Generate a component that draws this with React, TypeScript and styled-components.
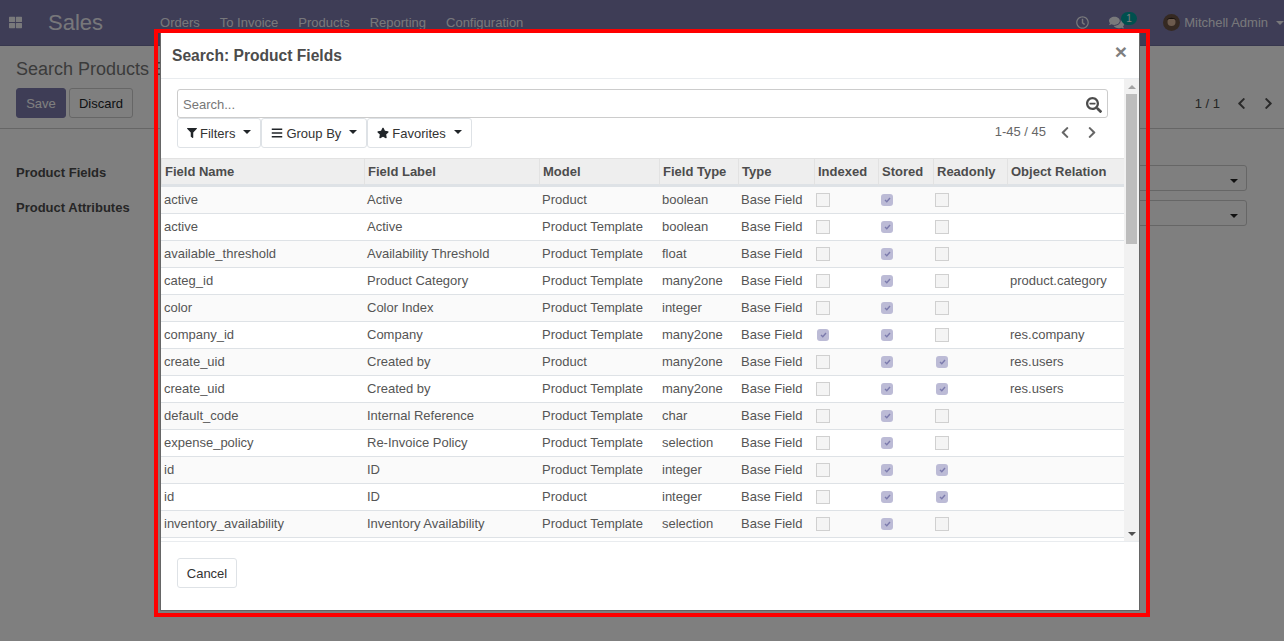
import { FC } from 'react'
import styled, { createGlobalStyle } from 'styled-components'
import {
  FaBars,
  FaChevronLeft,
  FaChevronRight,
  FaComments,
  FaFilter,
  FaRegClock,
  FaSearchMinus,
  FaStar,
  FaThLarge
} from 'react-icons/fa'

const GlobalStyle = createGlobalStyle`
  html, body {
    margin: 0;
    height: 100%;
    overflow: hidden;
    background: #fff;
    font-family: "Liberation Sans", Arial, sans-serif;
    font-size: 13px;
    color: #4c4c4c;
  }
  * { box-sizing: border-box; }
`

const Page = styled.div`
  height: 641px;
  display: flex;
  flex-direction: column;
`

const NavBar = styled.nav`
  height: 46px;
  background: #7c7bad;
  border-bottom: 1px solid #6f6e9c;
  display: flex;
  align-items: center;
  color: rgba(255, 255, 255, 0.9);
  padding-left: 9px;
`

const AppsIcon = styled(FaThLarge)`
  width: 13px;
  height: 13px;
  margin-right: 26px;
`

const Brand = styled.span`
  font-size: 22px;
  margin-right: 57px;
`

const NavItem = styled.span`
  margin-right: 20px;
`

const NavRight = styled.div`
  margin-left: auto;
  display: flex;
  align-items: center;
`

const Systray = styled.span<{ $gap: number }>`
  position: relative;
  display: flex;
  margin-right: ${({ $gap }) => $gap}px;
`

const Counter = styled.span`
  position: absolute;
  top: -3px;
  left: 12px;
  background: #00a09d;
  border-radius: 7px;
  font-size: 10px;
  line-height: 13px;
  padding: 0 5px;
  color: #fff;
`

const Avatar = styled.svg`
  width: 17px;
  height: 17px;
  margin-right: 4px;
`

const Caret = styled.span`
  display: inline-block;
  width: 0;
  height: 0;
  border-top: 4px solid currentColor;
  border-left: 4px solid transparent;
  border-right: 4px solid transparent;
`

const UserCaret = styled(Caret)`
  margin-left: 8px;
`

const ControlPanel = styled.div`
  height: 83px;
  background: #fff;
  border-bottom: 1px solid #ccc;
  padding: 12px 10px 0 16px;
`

const Breadcrumb = styled.div`
  font-size: 18px;
  line-height: 22px;
  color: #777;
  margin-bottom: 8px;
`

const ControlRow = styled.div`
  display: flex;
  align-items: center;
  gap: 3px;
`

const SaveButton = styled.button`
  width: 50px;
  height: 30px;
  border: 1px solid #7c7bad;
  border-radius: 3px;
  background: #7c7bad;
  color: #fff;
  font: inherit;
`

const DiscardButton = styled.button`
  width: 64px;
  height: 30px;
  border: 1px solid #ccc;
  border-radius: 3px;
  background: #fff;
  color: #212529;
  font: inherit;
`

const FormPager = styled.div`
  margin-left: auto;
  display: flex;
  align-items: center;
  gap: 14px;
  color: #4c4c4c;
`

const PagerIcon = styled.span`
  display: flex;
  color: #555;
  margin-left: 2px;
  & svg {
    width: 11px;
    height: 13px;
  }
`

const FormArea = styled.div`
  padding: 33px 37px 0 16px;
  display: flex;
  flex-direction: column;
  gap: 14px;
`

const FormRow = styled.div`
  display: flex;
  align-items: flex-start;
  height: 21px;
  line-height: 21px;
  font-weight: bold;
`

const FormSelect = styled.div`
  margin: 3px 0 0 auto;
  width: 120px;
  height: 26px;
  border: 1px solid #ccc;
  border-radius: 3px;
  display: flex;
  align-items: center;
  justify-content: flex-end;
  padding: 6px 8px 0 0;
  color: #222;
`

const Backdrop = styled.div`
  position: fixed;
  inset: 0;
  background: rgba(0, 0, 0, 0.5);
`

const Modal = styled.div`
  position: fixed;
  left: 160px;
  top: 33px;
  width: 980px;
  height: 578px;
  background: #fff;
  border: 1px solid #666;
  border-top: 0;
  display: flex;
  flex-direction: column;
`

const Highlight = styled.div`
  position: fixed;
  left: 154px;
  top: 29px;
  width: 996px;
  height: 588px;
  border: 4px solid #f00;
  pointer-events: none;
`

const ModalHeader = styled.header`
  height: 46px;
  flex: none;
  border-bottom: 1px solid #e9ecef;
  display: flex;
  align-items: center;
  justify-content: space-between;
  padding: 0 12px 0 11px;
`

const ModalTitle = styled.h4`
  margin: 0;
  font-size: 15.6px;
  font-weight: bold;
  color: #4c4c4c;
`

const CloseMark = styled.span`
  font-size: 21px;
  font-weight: bold;
  line-height: 1;
  color: #7f7f7f;
  margin-top: -8px;
`

const ModalBody = styled.div`
  height: 463px;
  flex: none;
  display: flex;
  border-bottom: 1px solid #e9ecef;
`

const ListPane = styled.div`
  flex: 1;
  min-width: 0;
`

const ScrollBar = styled.div`
  width: 15px;
  flex: none;
  background: #f1f1f1;
  display: flex;
  flex-direction: column;
`

const ScrollButton = styled.div<{ $up?: boolean }>`
  height: 15px;
  flex: none;
  display: flex;
  align-items: center;
  justify-content: center;
  color: ${({ $up }) => ($up ? '#a3a3a3' : '#505050')};
  margin-top: ${({ $up }) => ($up ? '0' : 'auto')};
`

const ScrollArrow = styled(Caret)<{ $up?: boolean }>`
  transform: ${({ $up }) => ($up ? 'rotate(180deg)' : 'none')};
`

const ScrollThumb = styled.div`
  height: 150px;
  margin: 0 2px;
  background: #bdbdbd;
`

const SearchArea = styled.div`
  padding: 10px 16px 0;
  height: 79px;
`

const SearchBox = styled.div`
  height: 29px;
  border: 1px solid #ccc;
  border-radius: 3px;
  display: flex;
  align-items: center;
  justify-content: space-between;
  padding: 2px 5px 0;
  color: #777;
`

const SearchIcon = styled(FaSearchMinus)`
  width: 16px;
  height: 16px;
  color: #4c4c4c;
`

const SearchTools = styled.div`
  display: flex;
  align-items: flex-start;
`

const ToolButton = styled.span<{ $iconWidth: number; $iconGap: number }>`
  height: 30px;
  border: 1px solid #dee2e6;
  border-radius: 3px;
  display: flex;
  align-items: center;
  padding: 0 9px;
  color: #333;
  & svg {
    width: ${({ $iconWidth }) => $iconWidth}px;
    height: ${({ $iconWidth }) => $iconWidth}px;
    margin-right: ${({ $iconGap }) => $iconGap}px;
    color: #212529;
  }
`

const ToolCaret = styled(Caret)`
  margin: -2px 0 0 8px;
  color: #212529;
`

const ListPager = styled.div`
  margin-left: auto;
  display: flex;
  align-items: center;
  gap: 14px;
  padding: 6px 11px 0 0;
  font-size: 13px;
  color: #666;
  & svg {
    width: 10px;
    height: 13px;
    margin-top: 2px;
  }
`

const PagerArrows = styled.span`
  display: flex;
  gap: 17px;
`

const Table = styled.table`
  width: 963px;
  table-layout: fixed;
  border-collapse: separate;
  border-spacing: 0;
  color: #555;
`

const HeadCell = styled.th`
  height: 29px;
  text-align: left;
  font-weight: bold;
  background: #eee;
  color: #4c4c4c;
  border-top: 1px solid #e2e2e2;
  border-left: 1px solid #e2e2e2;
  border-bottom: 3px solid #dee2e6;
  padding: 0 3px 1px;
  white-space: nowrap;
`

const Row = styled.tr`
  &:nth-child(odd) td {
    background: #fafafa;
  }
`

const Cell = styled.td`
  height: 27px;
  padding: 0 3px 2px;
  border-bottom: 1px solid #dee2e6;
  white-space: nowrap;
`

const CheckCell = styled(Cell)`
  padding: 0;
`

const CheckMark = styled.span<{ $checked: boolean }>`
  display: flex;
  align-items: center;
  justify-content: center;
  margin-left: ${({ $checked }) => ($checked ? '3px' : '2px')};
  width: ${({ $checked }) => ($checked ? '12px' : '14px')};
  height: ${({ $checked }) => ($checked ? '12px' : '14px')};
  border-radius: ${({ $checked }) => ($checked ? '3px' : '0')};
  background: ${({ $checked }) => ($checked ? '#bcbbd6' : '#f4f4f4')};
  border: ${({ $checked }) => ($checked ? '0' : '1px solid #d0d0d0')};
`

const Tick = styled.svg`
  width: 7px;
  height: 6px;
`

const ModalFooter = styled.footer`
  flex: 1;
  padding: 16px;
`

const CancelButton = styled.button`
  width: 60px;
  height: 30px;
  background: #fff;
  border: 1px solid #dee2e6;
  border-radius: 3px;
  color: #333;
  font: inherit;
`

const columns: [string, number][] = [
  ['Field Name', 203],
  ['Field Label', 175],
  ['Model', 120],
  ['Field Type', 79],
  ['Type', 76],
  ['Indexed', 64],
  ['Stored', 55],
  ['Readonly', 74],
  ['Object Relation', 117]
]

const PT = 'Product Template'

// name, label, model, field type, indexed, stored, readonly, relation
type FieldRow = [string, string, string, string, boolean, boolean, boolean, string?]

const rows: FieldRow[] = [
  ['active', 'Active', 'Product', 'boolean', false, true, false],
  ['active', 'Active', PT, 'boolean', false, true, false],
  ['available_threshold', 'Availability Threshold', PT, 'float', false, true, false],
  ['categ_id', 'Product Category', PT, 'many2one', false, true, false, 'product.category'],
  ['color', 'Color Index', PT, 'integer', false, true, false],
  ['company_id', 'Company', PT, 'many2one', true, true, false, 'res.company'],
  ['create_uid', 'Created by', 'Product', 'many2one', false, true, true, 'res.users'],
  ['create_uid', 'Created by', PT, 'many2one', false, true, true, 'res.users'],
  ['default_code', 'Internal Reference', PT, 'char', false, true, false],
  ['expense_policy', 'Re-Invoice Policy', PT, 'selection', false, true, false],
  ['id', 'ID', PT, 'integer', false, true, true],
  ['id', 'ID', 'Product', 'integer', false, true, true],
  ['inventory_availability', 'Inventory Availability', PT, 'selection', false, true, false]
]

const Check: FC<{ checked: boolean }> = ({ checked }) => (
  <CheckMark $checked={checked}>
    {checked && (
      <Tick viewBox="0 0 7 6">
        <path d="M1 3l1.8 1.8L6 1" fill="none" stroke="#7c7bad" strokeWidth="1.4" />
      </Tick>
    )}
  </CheckMark>
)

export default function App() {
  return (
    <>
      <GlobalStyle />
      <Page>
        <NavBar>
          <AppsIcon />
          <Brand>Sales</Brand>
          <NavItem>Orders</NavItem>
          <NavItem>To Invoice</NavItem>
          <NavItem>Products</NavItem>
          <NavItem>Reporting</NavItem>
          <NavItem>Configuration</NavItem>
          <NavRight>
            <Systray $gap={20}>
              <FaRegClock size={13} />
            </Systray>
            <Systray $gap={39}>
              <FaComments size={15} />
              <Counter>1</Counter>
            </Systray>
            <Avatar viewBox="0 0 17 17">
              <circle cx="8.5" cy="8.5" r="8.5" fill="#6b5344" />
              <circle cx="8.5" cy="8" r="4" fill="#d8b49a" />
              <path d="M4 6c1-3 8-3 9 0l-2-1H6z" fill="#2c2018" />
            </Avatar>
            Mitchell Admin
            <UserCaret />
          </NavRight>
        </NavBar>
        <ControlPanel>
          <Breadcrumb>Search Products E</Breadcrumb>
          <ControlRow>
            <SaveButton>Save</SaveButton>
            <DiscardButton>Discard</DiscardButton>
            <FormPager>
              1 / 1
              <PagerIcon>
                <FaChevronLeft />
              </PagerIcon>
              <PagerIcon>
                <FaChevronRight />
              </PagerIcon>
            </FormPager>
          </ControlRow>
        </ControlPanel>
        <FormArea>
          <FormRow>
            Product Fields
            <FormSelect>
              <Caret />
            </FormSelect>
          </FormRow>
          <FormRow>
            Product Attributes
            <FormSelect>
              <Caret />
            </FormSelect>
          </FormRow>
        </FormArea>
      </Page>
      <Backdrop />
      <Modal>
        <ModalHeader>
          <ModalTitle>Search: Product Fields</ModalTitle>
          <CloseMark>×</CloseMark>
        </ModalHeader>
        <ModalBody>
          <ListPane>
            <SearchArea>
              <SearchBox>
                Search...
                <SearchIcon />
              </SearchBox>
              <SearchTools>
                <ToolButton $iconWidth={10} $iconGap={3}>
                  <FaFilter />
                  Filters
                  <ToolCaret />
                </ToolButton>
                <ToolButton $iconWidth={12} $iconGap={3}>
                  <FaBars />
                  Group By
                  <ToolCaret />
                </ToolButton>
                <ToolButton $iconWidth={12} $iconGap={3}>
                  <FaStar />
                  Favorites
                  <ToolCaret />
                </ToolButton>
                <ListPager>
                  1-45 / 45
                  <PagerArrows>
                    <FaChevronLeft />
                    <FaChevronRight />
                  </PagerArrows>
                </ListPager>
              </SearchTools>
            </SearchArea>
            <Table>
              <colgroup>
                {columns.map(([name, width]) => (
                  <col key={name} width={width} />
                ))}
              </colgroup>
              <thead>
                <tr>
                  {columns.map(([name]) => (
                    <HeadCell key={name}>{name}</HeadCell>
                  ))}
                </tr>
              </thead>
              <tbody>
                {rows.map((r, i) => (
                  <Row key={i}>
                    <Cell>{r[0]}</Cell>
                    <Cell>{r[1]}</Cell>
                    <Cell>{r[2]}</Cell>
                    <Cell>{r[3]}</Cell>
                    <Cell>Base Field</Cell>
                    <CheckCell>
                      <Check checked={r[4]} />
                    </CheckCell>
                    <CheckCell>
                      <Check checked={r[5]} />
                    </CheckCell>
                    <CheckCell>
                      <Check checked={r[6]} />
                    </CheckCell>
                    <Cell>{r[7]}</Cell>
                  </Row>
                ))}
              </tbody>
            </Table>
          </ListPane>
          <ScrollBar>
            <ScrollButton $up>
              <ScrollArrow $up />
            </ScrollButton>
            <ScrollThumb />
            <ScrollButton>
              <ScrollArrow />
            </ScrollButton>
          </ScrollBar>
        </ModalBody>
        <ModalFooter>
          <CancelButton>Cancel</CancelButton>
        </ModalFooter>
      </Modal>
      <Highlight />
    </>
  )
}
